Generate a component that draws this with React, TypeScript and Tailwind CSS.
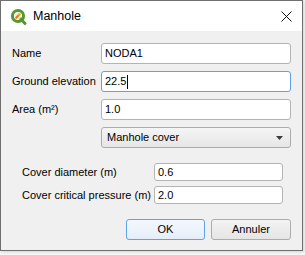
import React from "react";

const font = { fontFamily: "'Liberation Sans', Arial, sans-serif" };

function QgisIcon() {
  return (
    <svg width="17" height="17" viewBox="0 0 17 17">
      <circle cx="8" cy="8" r="5.6" fill="none" stroke="#589632" strokeWidth="3" />
      <path d="M9 9 L15 15.5" stroke="#589632" strokeWidth="3" strokeLinecap="round" />
      <circle cx="8" cy="8" r="3" fill="#f2f2e6" />
      <path d="M6.2 9.8 L9.5 6.2" stroke="#ee7913" strokeWidth="2.2" strokeLinecap="round" />
      <circle cx="9.4" cy="6.3" r="1.2" fill="#f0c419" />
    </svg>
  );
}

function Field({ value, focused, caret, w = "w-[190px]", h = "h-[21px]" }: { value: string; focused?: boolean; caret?: boolean; w?: string; h?: string }) {
  return (
    <div
      className={`${w} ${h} shrink-0 flex items-center bg-white rounded-[3px] border px-[3px] text-black ${
        focused ? "border-[#5da3e6]" : "border-[#b4b4b4]"
      }`}
    >
      <span>{value}</span>
      {caret && <span className="ml-[1px] w-px h-[14px] bg-black" />}
    </div>
  );
}

export default function App() {
  const rows = [
    { label: "Name", value: "NODA1" },
    { label: "Ground elevation", value: "22.5", focused: true },
    { label: "Area (m²)", value: "1.0" },
  ];
  return (
    <div className="w-[305px] h-[255px] bg-[#f7f7f7] leading-none" style={font}>
      <div className="w-[303px] h-[251px] border border-[#6f6f6f] flex flex-col shadow-[1px_1px_3px_rgba(0,0,0,0.15)]">
        <div className="h-[30px] shrink-0 bg-white flex items-center pl-[9px] pr-[10px]">
          <QgisIcon />
          <span className="ml-[6px] text-[12.5px] text-black whitespace-nowrap">Manhole</span>
          <svg className="ml-auto" width="11" height="11" viewBox="0 0 11 11">
            <path d="M0.5 0.5 L10.5 10.5 M10.5 0.5 L0.5 10.5" stroke="#111" strokeWidth="1" />
          </svg>
        </div>
        <div className="flex-1 bg-[#f0f0f0] pt-[12px] pl-[11px] flex flex-col text-[11px] text-black whitespace-nowrap">
          <div className="flex flex-col gap-[7px]">
            {rows.map((r) => (
              <div key={r.label} className="flex items-center">
                <span className="w-[89px] shrink-0">{r.label}</span>
                <Field value={r.value} focused={r.focused} caret={r.focused} />
              </div>
            ))}
            <div className="flex items-center">
              <span className="w-[89px] shrink-0" />
              <div className="w-[190px] h-[21px] flex items-center rounded-[3px] border border-[#acacac] bg-gradient-to-b from-[#f5f5f5] to-[#e6e6e6] px-[5px]">
                <span>Manhole cover</span>
                <svg className="ml-auto mr-[2px]" width="7" height="4" viewBox="0 0 7 4">
                  <path d="M0 0 L7 0 L3.5 4 Z" fill="#3c3c3c" />
                </svg>
              </div>
            </div>
          </div>
          <div className="mt-[15px] pl-[10px] flex flex-col gap-[5px]">
            <div className="flex items-center">
              <span className="w-[132px] shrink-0">Cover diameter (m)</span>
              <Field value="0.6" w="w-[129px]" h="h-[18px]" />
            </div>
            <div className="flex items-center">
              <span className="w-[132px] shrink-0">Cover critical pressure (m)</span>
              <Field value="2.0" w="w-[129px]" h="h-[18px]" />
            </div>
          </div>
          <div className="mt-[15px] flex gap-[6px] pl-[114px]">
            <button className="w-[79px] h-[21px] rounded-[3px] border border-[#5da3e6] bg-gradient-to-b from-[#f4f8fc] to-[#e5eef8] text-[11px]">
              OK
            </button>
            <button className="w-[80px] h-[21px] rounded-[3px] border border-[#acacac] bg-gradient-to-b from-[#f3f3f3] to-[#e5e5e5] text-[11px]">
              Annuler
            </button>
          </div>
        </div>
      </div>
    </div>
  );
}
